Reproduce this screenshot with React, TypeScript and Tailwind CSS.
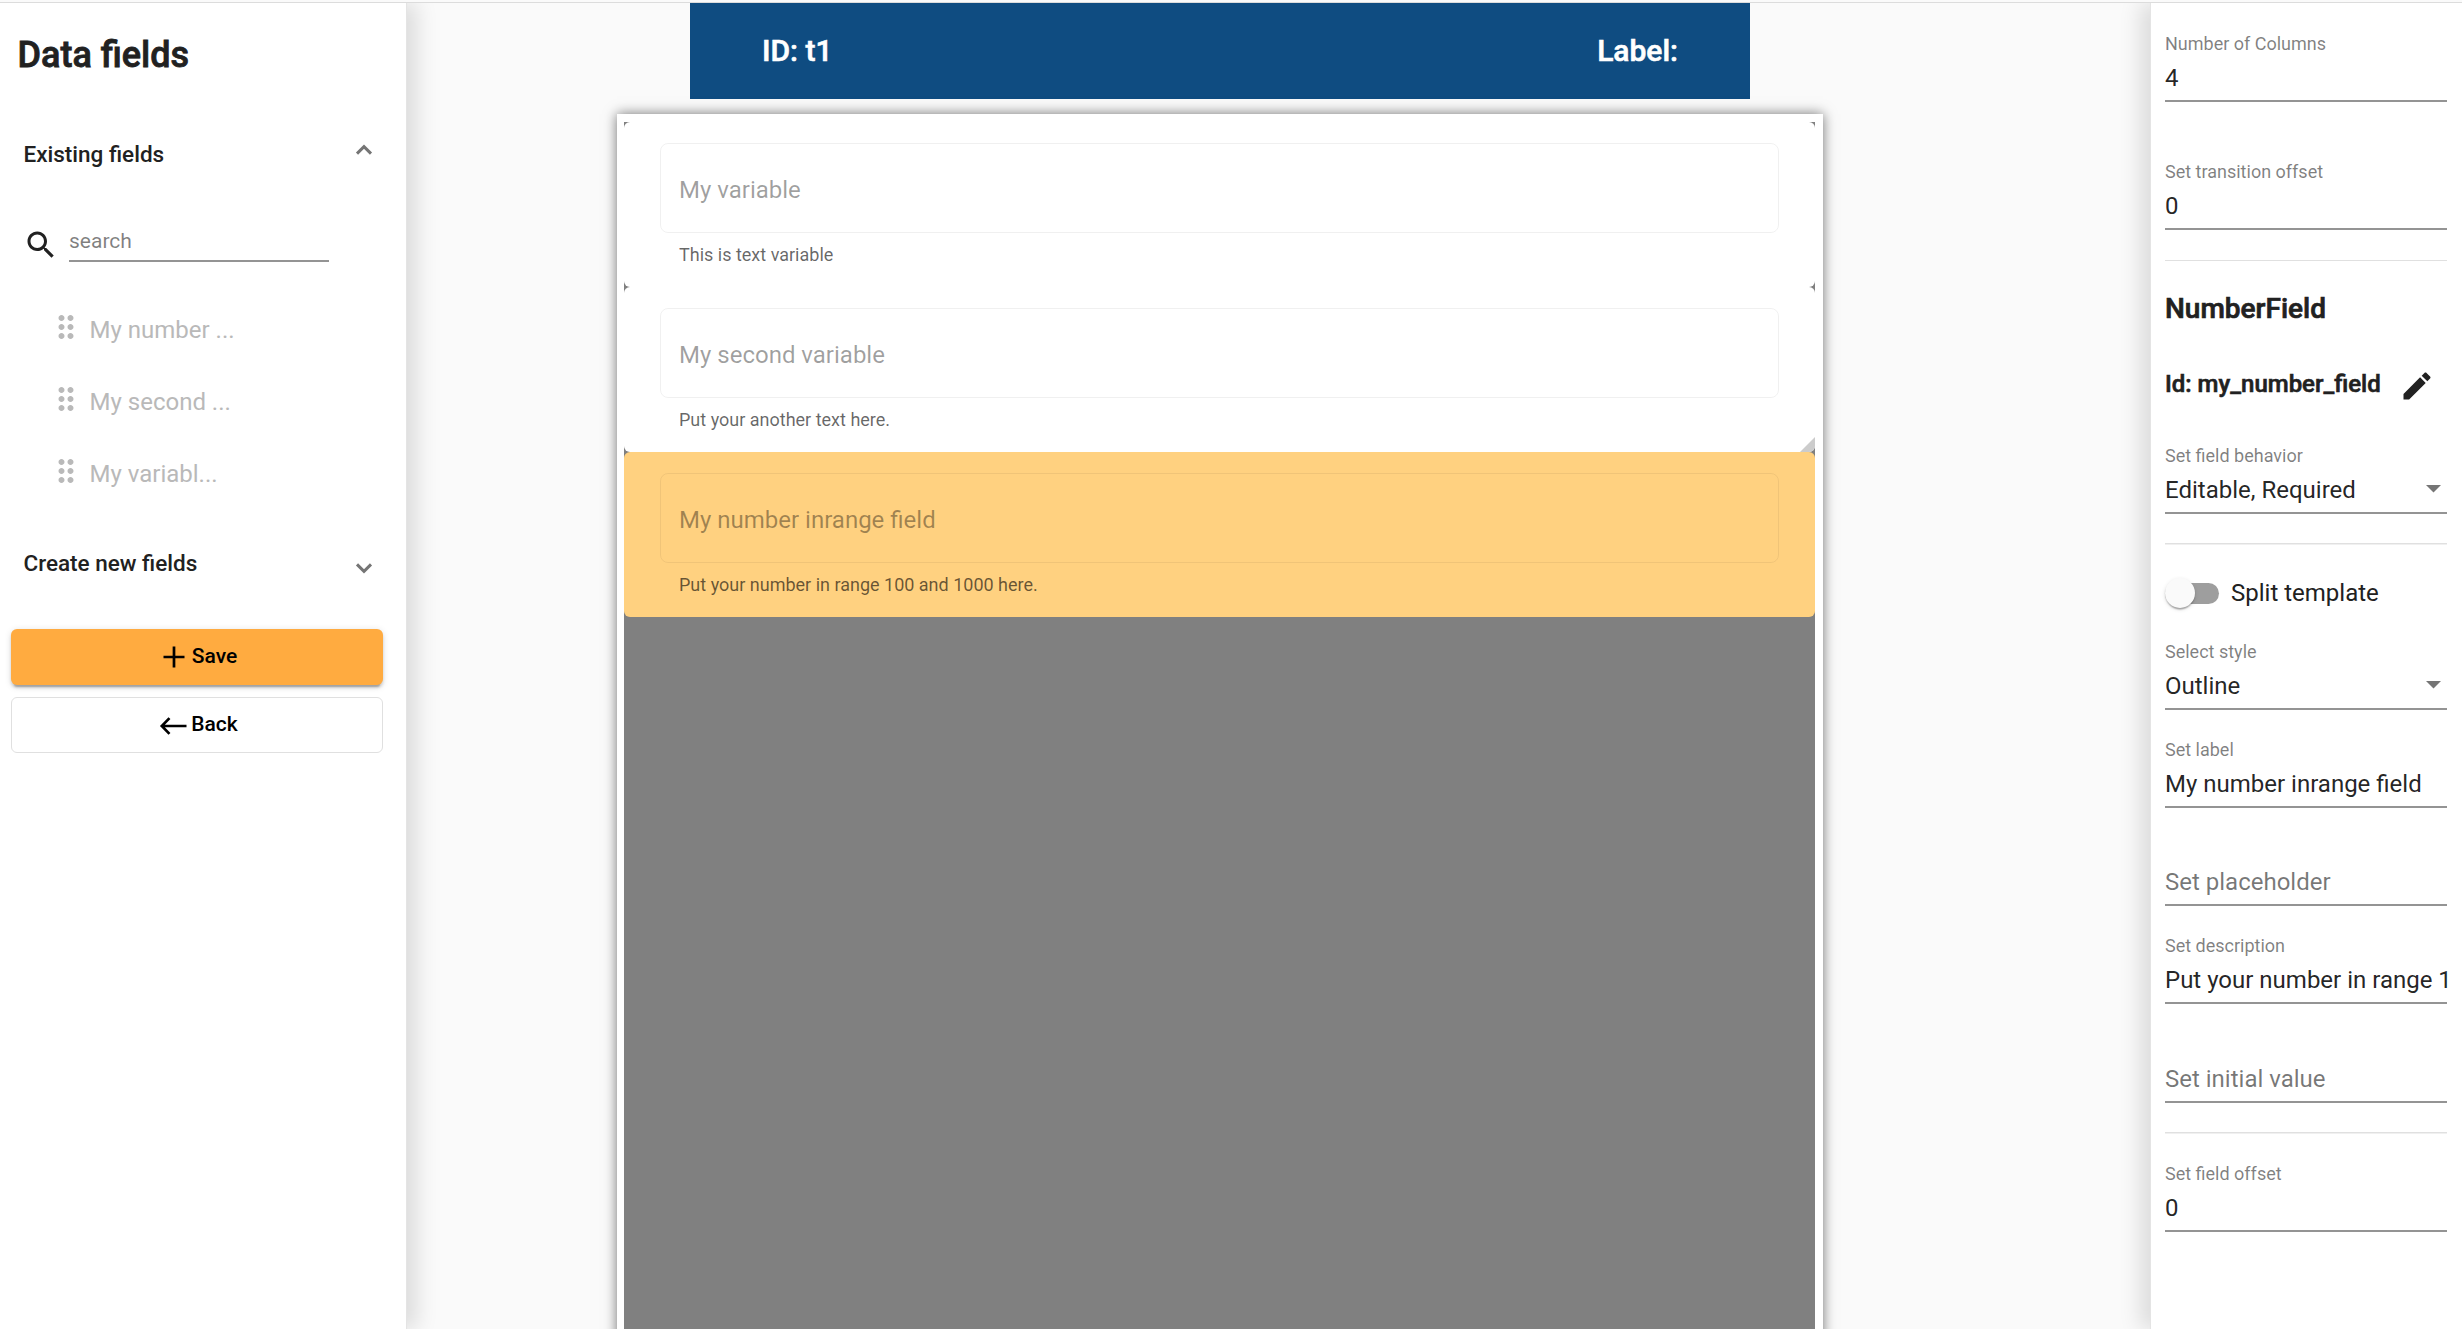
import React from 'react';

type Icon = { d: string; className?: string };

const SEARCH =
  'M15.5 14h-.79l-.28-.27C15.41 12.59 16 11.11 16 9.5 16 5.91 13.09 3 9.5 3S3 5.91 3 9.5 5.91 16 9.5 16c1.61 0 3.09-.59 4.23-1.57l.27.28v.79l5 4.99L20.49 19l-4.99-5zm-6 0C7.01 14 5 11.99 5 9.5S7.01 5 9.5 5 14 7.01 14 9.5 11.99 14 9.5 14z';
const DRAG =
  'M11 18c0 1.1-.9 2-2 2s-2-.9-2-2 .9-2 2-2 2 .9 2 2zm-2-8c-1.1 0-2 .9-2 2s.9 2 2 2 2-.9 2-2-.9-2-2-2zm0-6c-1.1 0-2 .9-2 2s.9 2 2 2 2-.9 2-2-.9-2-2-2zm6 4c1.1 0 2-.9 2-2s-.9-2-2-2-2 .9-2 2 .9 2 2 2zm0 2c-1.1 0-2 .9-2 2s.9 2 2 2 2-.9 2-2-.9-2-2-2zm0 6c-1.1 0-2 .9-2 2s.9 2 2 2 2-.9 2-2-.9-2-2-2z';
const ADD = 'M19 12.9h-6.1V19h-1.8v-6.1H5v-1.8h6.1V5h1.8v6.1H19v1.8z';
const BACKSPACE = 'M21 11.1H6.6l3.7-3.7L9 6.2 3.3 12 9 17.8l1.3-1.2-3.7-3.7H21z';
const EDIT =
  'M3 17.25V21h3.75L17.81 9.94l-3.75-3.75L3 17.25zM20.71 7.04c.39-.39.39-1.02 0-1.41l-2.34-2.34c-.39-.39-1.02-.39-1.41 0l-1.83 1.83 3.75 3.75 1.83-1.83z';

function MatIcon({ d, className = '' }: Icon) {
  return (
    <svg viewBox="0 0 24 24" fill="currentColor" className={`size-9 shrink-0 ${className}`}>
      <path d={d} />
    </svg>
  );
}

function Chevron({ up, className = '' }: { up?: boolean; className?: string }) {
  return (
    <svg width="18" height="12" viewBox="0 0 18 12" fill="none" stroke="#757575" strokeWidth="3" className={className}>
      <path d={up ? 'M2 9.6 9 2.6 16 9.6' : 'M2 2.4 9 9.4 16 2.4'} />
    </svg>
  );
}

type FieldProps = { label?: string; value?: string; placeholder?: string; select?: boolean; className: string };

function Field({ label, value, placeholder, select, className }: FieldProps) {
  return (
    <div className={`h-[70px] border-b-2 border-[#949494] ${className}`}>
      <div className="h-6 text-[18px] leading-[23px] text-black/50">{label}</div>
      <div className="mt-[6px] flex h-8 items-center justify-between whitespace-nowrap text-[24px] leading-8">
        {value ? <span className="text-black/87">{value}</span> : <span className="text-black/54">{placeholder}</span>}
        {select && (
          <svg width="15" height="8" viewBox="0 0 15 8" className="mb-[3px] mr-[6px]" fill="#757575">
            <path d="M0 0h15L7.500 7.500z" />
          </svg>
        )}
      </div>
    </div>
  );
}

function Cell({ title, hint, selected, resizable }: { title: string; hint: string; selected?: boolean; resizable?: boolean }) {
  return (
    <div className={`relative h-[165px] overflow-hidden rounded-md px-9 pt-[21px] ${selected ? 'bg-[#ffd180]' : 'bg-white'}`}>
      <div className="h-[90px] rounded-[8px] border border-black/6 pl-[18px] pt-[2px] text-[24px] leading-[88px] text-black/38">
        {title}
      </div>
      <div className="pl-[19px] pt-[8px] text-[18px] leading-[27px] text-black/60">{hint}</div>
      {resizable && (
        <div className="absolute bottom-0 right-0 size-[15px] bg-[#ccc] [clip-path:polygon(100%_0,100%_100%,0_100%)]" />
      )}
    </div>
  );
}

const existing = ['My number ...', 'My second ...', 'My variabl...'];

export default function App() {
  return (
    <div className="flex h-[1329px] w-[2462px] flex-col overflow-hidden bg-[#fafafa] font-['Roboto',sans-serif] text-[#212121]">
      <div className="h-[3px] shrink-0 border-b border-[#dcdcdc]" />
      <div className="flex h-[1326px] overflow-hidden">
        <aside className="relative z-10 h-full w-[407px] shrink-0 border-r border-[#e4e4e4] bg-white shadow-[10px_0_20px_rgba(0,0,0,0.12)]">
          <h1 className="ml-[17.500px] mt-[30px] text-[36px] font-medium leading-[44px] [-webkit-text-stroke:0.8px_#212121]">Data fields</h1>
          <div className="mt-[62px] flex h-[30px] items-center justify-between pl-[23.500px] pr-[33px]">
            <span className="text-[22.5px] font-medium leading-[30px]">Existing fields</span>
            <Chevron up className="mb-[8px]" />
          </div>
          <div className="mt-[55px] flex pl-[23px]">
            <MatIcon d={SEARCH} className="mt-[3px] mr-[10px]" />
            <div className="h-[38px] w-[260px] border-b-2 border-[#949494] text-[21px] leading-[34px] text-black/50">search</div>
          </div>
          <div className="mt-[46px] flex flex-col gap-9 pl-[48px]">
            {existing.map((name) => (
              <div key={name} className="flex h-9 text-[#b9b9b9]">
                <MatIcon d={DRAG} />
                <span className="ml-[5.500px] mt-[3px] text-[24px] leading-9">{name}</span>
              </div>
            ))}
          </div>
          <div className="mt-[59px] flex h-[30px] items-center justify-between pl-[23.500px] pr-[33px]">
            <span className="text-[22.5px] font-medium leading-[30px]">Create new fields</span>
            <Chevron className="mt-[9px]" />
          </div>
          <div className="ml-[11px] mt-[51px] flex w-[372px] flex-col gap-3 text-[21px] font-medium text-black">
            <button className="flex h-14 items-center justify-center rounded-md bg-[#ffab40] pr-px shadow-[0_4.500px_1.500px_-3px_rgba(0,0,0,0.2),0_3px_3px_0_rgba(0,0,0,0.14),0_1.500px_7.500px_0_rgba(0,0,0,0.12)]">
              <MatIcon d={ADD} />
              Save
            </button>
            <button className="flex h-14 items-center justify-center rounded-md border border-[#e0e0e0] bg-white pr-px">
              <MatIcon d={BACKSPACE} className="mt-[2px]" />
              Back
            </button>
          </div>
        </aside>

        <main className="min-w-0 flex-1">
          <header className="ml-[283px] flex h-24 w-[1060px] items-center justify-between bg-[#0f4c81] px-[72px] pb-[2px] text-[30px] font-medium text-white [-webkit-text-stroke:0.600px_white]">
            <span>ID: t1</span>
            <span>Label:</span>
          </header>
          <section className="ml-[210px] mt-[15px] h-[1300px] w-[1206px] bg-white pl-[7px] pr-2 pt-2 shadow-[0_0_12px_rgba(0,0,0,0.55)]">
            <div className="h-full bg-[#808080]">
              <Cell title="My variable" hint="This is text variable" />
              <Cell title="My second variable" hint="Put your another text here." resizable />
              <Cell title="My number inrange field" hint="Put your number in range 100 and 1000 here." selected />
            </div>
          </section>
        </main>

        <aside className="relative z-10 h-full w-[312px] shrink-0 border-l border-[#e4e4e4] bg-white pl-[14px] pr-[15px] shadow-[-10px_0_20px_rgba(0,0,0,0.12)]">
          <Field label="Number of Columns" value="4" className="mt-[29px]" />
          <Field label="Set transition offset" value="0" className="mt-[58px]" />
          <div className="mt-[30px] h-px bg-[#e0e0e0]" />
          <h3 className="mt-[27px] text-[28px] font-medium leading-[42px] [-webkit-text-stroke:0.700px_#212121]">NumberField</h3>
          <div className="mt-9 flex h-[38px] justify-between pr-[12px]">
            <h4 className="text-[24px] font-medium leading-9 [-webkit-text-stroke:0.600px_#212121]">Id: my_number_field</h4>
            <MatIcon d={EDIT} className="mt-[2px]" />
          </div>
          <Field label="Set field behavior" value="Editable, Required" select className="mt-10" />
          <div className="mt-[29px] h-[2px] border-b border-t border-b-[#f0f0f0] border-t-[#e0e0e0]" />
          <div className="mt-[30px] flex h-9 items-center gap-3">
            <div className="flex h-[21px] w-[54px] items-center rounded-full bg-[#9e9e9e]">
              <div className="size-[30px] shrink-0 rounded-full bg-[#fafafa] shadow-[0_3px_1.500px_-1.500px_rgba(0,0,0,0.2),0_1.500px_1.500px_0_rgba(0,0,0,0.14),0_1.500px_4.500px_0_rgba(0,0,0,0.12)]" />
            </div>
            <span className="text-[24px] leading-9">Split template</span>
          </div>
          <Field label="Select style" value="Outline" select className="mt-[29px]" />
          <Field label="Set label" value="My number inrange field" className="mt-[28px]" />
          <Field placeholder="Set placeholder" className="mt-[28px]" />
          <Field label="Set description" value="Put your number in range 1" className="mt-[28px]" />
          <Field placeholder="Set initial value" className="mt-[29px]" />
          <div className="mt-[29px] h-[2px] border-b border-t border-b-[#f0f0f0] border-t-[#e0e0e0]" />
          <Field label="Set field offset" value="0" className="mt-[28px]" />
        </aside>
      </div>
    </div>
  );
}
